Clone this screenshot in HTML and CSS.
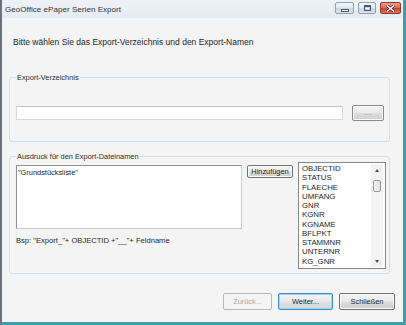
FILE: index.html
```html
<!DOCTYPE html>
<html>
<head>
<meta charset="utf-8">
<link rel="stylesheet" href="styles.css">
</head>
<body>
<div class="window">
  <div class="titlebar">
    <span class="title">GeoOffice ePaper Serien Export</span>
    <div class="caption">
      <span class="cap cap-min"><span class="glyph-min"></span></span>
      <span class="cap cap-max"><span class="glyph-max"></span></span>
      <span class="cap cap-close">
        <svg width="9" height="7" viewBox="0 0 9 7"><path d="M1 0.5 L8 6.5 M8 0.5 L1 6.5" stroke="#5a1a12" stroke-width="2.6"/><path d="M1 0.5 L8 6.5 M8 0.5 L1 6.5" stroke="#ffffff" stroke-width="1.5"/></svg>
      </span>
    </div>
  </div>
  <div class="client">
    <p class="heading">Bitte wählen Sie das Export-Verzeichnis und den Export-Namen</p>
    <fieldset class="group group-dir">
      <legend>Export-Verzeichnis</legend>
      <div class="dir-row">
        <div class="textbox"></div>
        <button class="btn btn-browse"><span class="dots">...</span></button>
      </div>
    </fieldset>
    <fieldset class="group group-name">
      <legend>Ausdruck für den Export-Dateinamen</legend>
      <div class="name-row">
        <div class="name-left">
          <div class="textarea">"Grundstücksliste"</div>
          <div class="example">Bsp: "Export_"+ OBJECTID +"__"+ Feldname</div>
        </div>
        <button class="btn btn-add">Hinzufügen</button>
        <div class="listbox">
          <ul class="items">
            <li>OBJECTID</li>
            <li>STATUS</li>
            <li>FLAECHE</li>
            <li>UMFANG</li>
            <li>GNR</li>
            <li>KGNR</li>
            <li>KGNAME</li>
            <li>BFLPKT</li>
            <li>STAMMNR</li>
            <li>UNTERNR</li>
            <li>KG_GNR</li>
          </ul>
          <div class="scrollbar">
            <span class="arrow arrow-up"></span>
            <span class="thumb"></span>
            <span class="track"></span>
            <span class="arrow arrow-down"></span>
          </div>
        </div>
      </div>
    </fieldset>
    <div class="buttons">
      <button class="btn btn-nav btn-disabled">Zurück...</button>
      <button class="btn btn-nav btn-default">Weiter...</button>
      <button class="btn btn-nav">Schließen</button>
    </div>
  </div>
</div>
</body>
</html>
```

FILE: styles.css
```css
* { box-sizing: border-box; }
html, body { margin: 0; padding: 0; }
body {
  width: 406px;
  height: 325px;
  overflow: hidden;
  font-family: "Liberation Sans", Arial, sans-serif;
  color: #222;
  background: #f4f4f4;
}
.window {
  width: 406px;
  height: 325px;
  display: flex;
  flex-direction: column;
  border-left: 2px solid #6b727a;
  border-right: 3px solid #3f9cab;
  border-bottom: 3px solid #3f9cab;
  background: #f4f4f4;
}
.titlebar {
  height: 18px;
  flex: none;
  display: flex;
  align-items: center;
  justify-content: space-between;
  background: linear-gradient(#eef2f6, #e6ebf1);
  padding-left: 3px;
  padding-right: 2px;
}
.title {
  font-size: 8px;
  color: #333;
  letter-spacing: 0.05px;
}
.caption {
  display: flex;
  align-items: center;
  gap: 4px;
  height: 14px;
  margin-top: -2px;
}
.cap {
  display: flex;
  align-items: center;
  justify-content: center;
  height: 12px;
  border: 1px solid #8ea1b6;
  border-radius: 2px;
  background: linear-gradient(#f4f7fa, #dfe6ee 50%, #ccd6e1 51%, #dbe3ec);
}
.cap-min { width: 19px; }
.cap-max { width: 18px; }
.cap-close {
  width: 21px;
  border-color: #8c3a2c;
  background: linear-gradient(#e8a090, #d4664f 50%, #c4412a 51%, #d8735a);
}
.glyph-min {
  width: 8px;
  height: 3px;
  margin-top: 4px;
  background: #fff;
  border: 1px solid #4a5766;
}
.glyph-max {
  width: 7px;
  height: 6px;
  border: 1px solid #4a5766;
  border-top-width: 2px;
  background: #fff;
  box-shadow: inset 0 0 0 1px #c9d2dc;
}
.client {
  flex: 1;
  display: flex;
  flex-direction: column;
  padding: 0 8px 0 7px;
}
.heading {
  margin: 19px 0 0 4px;
  font-size: 8.5px;
  line-height: 11px;
  color: #252525;
}
.group {
  margin: 0;
  width: 381px;
  border: 1px solid #d3dde5;
  border-radius: 3px;
  min-width: 0;
}
.group legend {
  font-size: 7.4px;
  line-height: 9px;
  padding: 0 1px;
  margin-left: 0;
  color: #2e2e2e;
}
.group-dir {
  margin-top: 25px;
  padding: 23px 5px 20px 6px;
}
.dir-row {
  display: flex;
  align-items: center;
  gap: 9px;
}
.textbox {
  width: 327px;
  height: 14px;
  background: #fff;
  border: 1px solid #d6d8dc;
  border-top-color: #c2c4c8;
}
.btn {
  font-family: "Liberation Sans", Arial, sans-serif;
  font-size: 7.4px;
  color: #222;
  padding: 0;
  border: 1px solid #707070;
  border-radius: 2px;
  background: linear-gradient(#f2f2f2, #ebebeb 48%, #dddddd 52%, #cfcfcf);
  box-shadow: inset 0 0 0 1px #fbfbfb;
}
.btn-browse {
  width: 32px;
  height: 16px;
  border-color: #8a8a8a;
  display: flex;
  align-items: center;
  justify-content: center;
}
.dots {
  font-size: 8px;
  line-height: 8px;
  color: #7a7a7a;
  letter-spacing: 0.3px;
}
.group-name {
  margin-top: 10px;
  padding: 1px 3px 4px 6px;
}
.name-row {
  display: flex;
  align-items: flex-start;
}
.name-left {
  width: 226px;
  display: flex;
  flex-direction: column;
  margin-top: 3px;
}
.textarea {
  height: 64px;
  background: #fff;
  border: 1px solid #c9cbcf;
  border-top-color: #8f9296;
  border-left-color: #8f9296;
  font-size: 7.4px;
  line-height: 9px;
  padding: 2px 0 0 1px;
}
.example {
  margin-top: 7px;
  font-size: 7.6px;
  line-height: 9px;
  color: #2a2a2a;
}
.btn-add {
  width: 46px;
  height: 13px;
  margin: 3px 5px 0 5px;
  line-height: 10px;
}
.listbox {
  width: 88px;
  height: 107px;
  background: #fff;
  border: 1px solid #828790;
  display: flex;
}
.items {
  list-style: none;
  margin: 0;
  padding: 1px 0 0 3px;
  flex: 1;
  font-size: 7.8px;
  line-height: 9.25px;
  letter-spacing: 0;
  color: #1e1e1e;
}
.scrollbar {
  width: 12px;
  display: flex;
  flex-direction: column;
  align-items: center;
  background: #f3f3f3;
  margin: 1px 2px 1px 0;
}
.arrow {
  flex: none;
  width: 0;
  height: 0;
  border-left: 2.5px solid transparent;
  border-right: 2.5px solid transparent;
}
.arrow-up {
  margin-top: 5px;
  border-bottom: 3px solid #505050;
}
.arrow-down {
  margin-bottom: 4px;
  border-top: 3px solid #505050;
}
.thumb {
  flex: none;
  margin-top: 8px;
  width: 8px;
  height: 12px;
  border: 1px solid #9a9a9a;
  border-radius: 2px;
  background: linear-gradient(90deg, #f2f2f2, #e2e2e2);
}
.track { flex: 1; }
.buttons {
  display: flex;
  justify-content: flex-end;
  gap: 6px;
  margin-top: 19px;
}
.btn-nav {
  height: 17px;
  line-height: 14px;
}
.btn-nav:nth-child(1) { width: 49px; }
.btn-nav:nth-child(2) { width: 55px; }
.btn-nav:nth-child(3) { width: 56px; }
.btn-disabled {
  color: #a8a8a8;
  border-color: #b5b9bc;
  background: #f4f4f4;
  box-shadow: none;
}
.btn-default {
  border-color: #3c8fc8;
  box-shadow: inset 0 0 0 1px #9fd4f5;
  background: linear-gradient(#f3f3f3, #ececec 48%, #dfe3e6 52%, #d4d8dc);
}
```
